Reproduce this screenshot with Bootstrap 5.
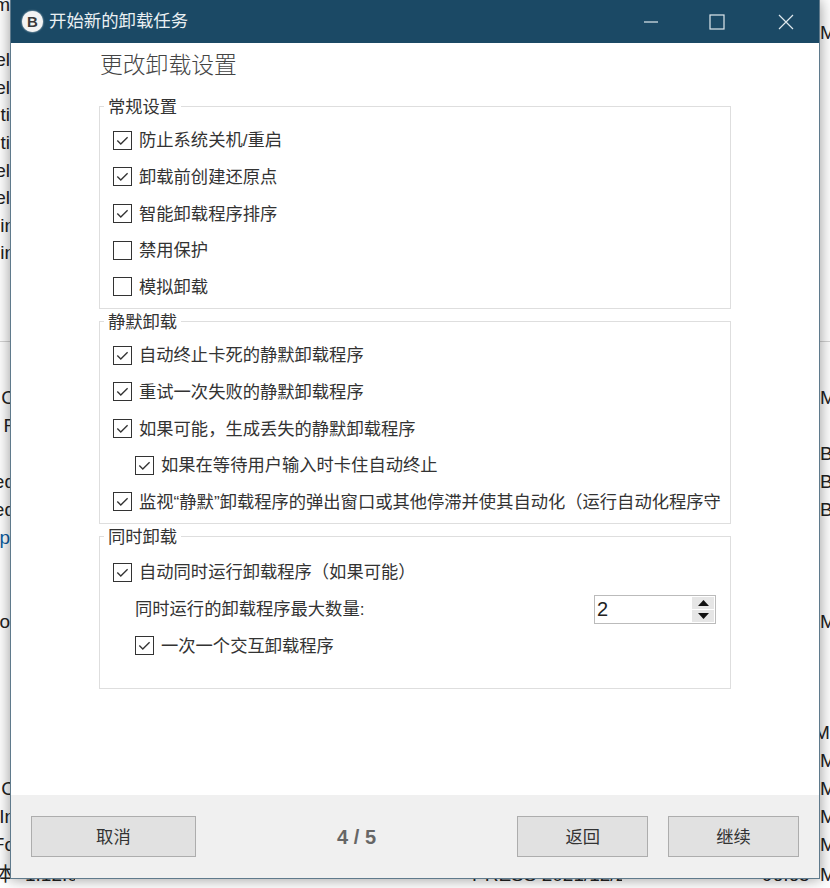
<!DOCTYPE html>
<html lang="zh-CN">
<head>
<meta charset="utf-8">
<title>开始新的卸载任务</title>
<link href="https://cdn.jsdelivr.net/npm/bootstrap@5.3.0/dist/css/bootstrap.min.css" rel="stylesheet">
<style>
html,body{height:888px;overflow:hidden;background:#fff;}
body{font-family:"Liberation Sans","Noto Sans CJK SC",sans-serif;color:#222;position:relative;}
.back-panel{height:342px;border-bottom:1px solid #d4d4d4;overflow:hidden;}
.back-panel>:first-child{margin-top:-9px;}
.back-panel2{height:546px;padding-top:42px;overflow:hidden;}
.back-row{height:27.6px;line-height:27.6px;font-size:19px;display:flex;justify-content:space-between;white-space:nowrap;}
.back-panel2 .back-row{height:27.95px;line-height:27.95px;}
.back-panel2 .back-last{margin-top:2px;}
.back-l{width:10px;display:flex;justify-content:flex-end;overflow:hidden;}
.back-cut{flex:none;margin-right:-5px;}
.back-r{width:10px;overflow:hidden;}
.back-shift{text-indent:-6px;}
.back-link{color:#0d5c9e;}
.back-date{width:150px;margin-left:auto;margin-right:140px;overflow:hidden;}
.back-size{width:50px;margin-right:8px;overflow:hidden;}
.back-ver{width:50px;margin-left:15px;overflow:hidden;}
.app-window{position:absolute;left:10px;top:0;width:810px;height:879px;background:#fff;border:solid #5f7a8c;border-width:0 1px 1px 1px;box-shadow:0 0 14px rgba(0,0,0,.42);display:flex;flex-direction:column;}
.title-strip{height:43px;flex:none;background:#1b4965;color:#eaf0f3;font-size:17.4px;padding-left:11px;gap:6px;}
.logo-disc{width:21px;height:21px;border-radius:50%;background:#f3f3f3;color:#3a3a3a;font:bold 15px/21px "Liberation Sans",sans-serif;text-align:center;box-shadow:0 0 2px #fff;}
.win-btns{margin-left:auto;margin-right:-1px;}
.win-btn{width:67.5px;height:43px;display:flex;align-items:center;justify-content:center;}
.win-btn:nth-child(2){padding-right:3px;}
.win-btn svg{display:block;}
.body-area{flex:1;padding:0 88px 0 88px;min-height:0;}
.page-head{font-size:22.8px;line-height:44px;height:63px;padding-left:1px;color:#444;font-weight:300;}
.grp{border:1px solid #dedede;margin-bottom:12px;padding-left:13px;overflow:hidden;}
.grp-a{height:203px;}
.grp-b{height:203px;}
.grp-c{height:153px;}
.grp-wrap{position:relative;}
.grp-title{position:absolute;left:5px;top:-9px;background:#fff;padding:0 4px;font-size:17.3px;line-height:20px;color:#333;z-index:1;}
.grp-list{padding-top:15px;}
.grp-c .grp-list{padding-top:17px;}
.opt{height:36.6px;display:flex;align-items:center;gap:7px;font-size:17.3px;color:#333;margin:0;white-space:nowrap;}
.opt-txt{padding-top:2px;}
.opt-in{padding-left:22px;}
.opt .form-check-input{width:19px;height:19px;margin:0;flex:none;border:1.4px solid #333;border-radius:0;background-color:#fff;box-shadow:none;}
.opt .form-check-input:checked{background-color:#fff;border-color:#333;background-size:100% 100%;background-image:url("data:image/svg+xml,%3Csvg xmlns='http://www.w3.org/2000/svg' viewBox='0 0 19 19'%3E%3Cpath d='M3.7 9.6l3.9 3.9 7.6-7.6' fill='none' stroke='%23333' stroke-width='1.5'/%3E%3C/svg%3E");}
.spin-row{height:36.6px;padding:2px 14px 0 22px;display:flex;align-items:center;justify-content:space-between;font-size:17.3px;color:#333;}
.spin-box{width:122px;height:29px;border:1px solid #bbb;display:flex;justify-content:space-between;padding:1px;}
.spin-val{font-size:20px;line-height:25px;color:#222;padding-left:1px;}
.spin-arrows{width:22px;display:flex;flex-direction:column;gap:1px;}
.spin-arrows span{flex:1;background:#e6e6e6;display:flex;align-items:center;justify-content:center;}
.foot-bar{height:83px;flex:none;background:#f0f0f0;padding:21px 20px 0 20px;}
.foot-btn{height:41px;background:#e1e1e1;border:1px solid #adadad;border-radius:0;color:#333;font-size:17.3px;padding:2px 0 0;line-height:1;}
.foot-btn:hover{background:#e1e1e1;border-color:#adadad;}
.btn-wide{width:165px;}
.btn-std{width:131px;}
.step-text{font-size:20px;font-weight:700;color:#666;width:322px;text-align:center;line-height:42px;}
.btn-gap{width:20px;}
</style>
</head>
<body>
<div class="back-panel">
  <div class="back-row"><span class="back-l">m</span></div>
  <div class="back-row"><span class="back-l"></span><span class="back-r">M</span></div>
  <div class="back-row"><span class="back-l">el</span></div>
  <div class="back-row"><span class="back-l">el</span></div>
  <div class="back-row"><span class="back-l">ti</span></div>
  <div class="back-row"><span class="back-l">ti</span></div>
  <div class="back-row"><span class="back-l">el</span></div>
  <div class="back-row"><span class="back-l">el</span></div>
  <div class="back-row"><span class="back-l"><span class="back-cut">in</span></span></div>
  <div class="back-row"><span class="back-l"><span class="back-cut">in</span></span></div>
</div>
<div class="back-panel2">
  <div class="back-row"><span class="back-l"><span class="back-cut">C</span></span><span class="back-r">M</span></div>
  <div class="back-row"><span class="back-l"><span class="back-cut">F</span></span><span class="back-r"></span></div>
  <div class="back-row"><span class="back-l"></span><span class="back-r">B</span></div>
  <div class="back-row"><span class="back-l"><span class="back-cut">ed</span></span><span class="back-r">B</span></div>
  <div class="back-row"><span class="back-l"><span class="back-cut">ed</span></span><span class="back-r">B</span></div>
  <div class="back-row"><span class="back-l back-link">p</span><span class="back-r"></span></div>
  <div class="back-row"></div>
  <div class="back-row"></div>
  <div class="back-row"><span class="back-l">o</span><span class="back-r">M</span></div>
  <div class="back-row"></div>
  <div class="back-row"></div>
  <div class="back-row"></div>
  <div class="back-row"><span class="back-l"></span><span class="back-r back-shift">MB</span></div>
  <div class="back-row"><span class="back-l"></span><span class="back-r">M</span></div>
  <div class="back-row"><span class="back-l"><span class="back-cut">C</span></span><span class="back-r">M</span></div>
  <div class="back-row"><span class="back-l"><span class="back-cut">In</span></span><span class="back-r">M</span></div>
  <div class="back-row"><span class="back-l"><span class="back-cut">Fo</span></span><span class="back-r">M</span></div>
  <div class="back-row back-last"><span class="back-l"><span class="back-cut">版本</span></span><span class="back-ver">1.12.0</span><span class="back-date">PRESS 2021/12/27</span><span class="back-size">96.65</span><span class="back-r">M</span></div>
</div>

<div class="app-window">
  <div class="title-strip d-flex align-items-center">
    <span class="logo-disc">B</span>
    <span>开始新的卸载任务</span>
    <div class="win-btns d-flex">
      <div class="win-btn"><svg width="16" height="16" viewBox="0 0 16 16"><path d="M1 8h14" stroke="#dfe8ed" stroke-width="1.2"/></svg></div>
      <div class="win-btn"><svg width="16" height="16" viewBox="0 0 16 16"><rect x="1" y="1" width="14" height="14" fill="none" stroke="#dfe8ed" stroke-width="1.2"/></svg></div>
      <div class="win-btn"><svg width="16" height="16" viewBox="0 0 16 16"><path d="M1 1l14 14M15 1L1 15" stroke="#dfe8ed" stroke-width="1.2"/></svg></div>
    </div>
  </div>
  <div class="body-area">
    <div class="page-head">更改卸载设置</div>
    <div class="grp-wrap">
      <div class="grp-title">常规设置</div>
      <div class="grp grp-a"><div class="grp-list">
        <label class="opt"><input class="form-check-input" type="checkbox" checked><span class="opt-txt">防止系统关机/重启</span></label>
        <label class="opt"><input class="form-check-input" type="checkbox" checked><span class="opt-txt">卸载前创建还原点</span></label>
        <label class="opt"><input class="form-check-input" type="checkbox" checked><span class="opt-txt">智能卸载程序排序</span></label>
        <label class="opt"><input class="form-check-input" type="checkbox"><span class="opt-txt">禁用保护</span></label>
        <label class="opt"><input class="form-check-input" type="checkbox"><span class="opt-txt">模拟卸载</span></label>
      </div></div>
    </div>
    <div class="grp-wrap">
      <div class="grp-title">静默卸载</div>
      <div class="grp grp-b"><div class="grp-list">
        <label class="opt"><input class="form-check-input" type="checkbox" checked><span class="opt-txt">自动终止卡死的静默卸载程序</span></label>
        <label class="opt"><input class="form-check-input" type="checkbox" checked><span class="opt-txt">重试一次失败的静默卸载程序</span></label>
        <label class="opt"><input class="form-check-input" type="checkbox" checked><span class="opt-txt">如果可能，生成丢失的静默卸载程序</span></label>
        <label class="opt opt-in"><input class="form-check-input" type="checkbox" checked><span class="opt-txt">如果在等待用户输入时卡住自动终止</span></label>
        <label class="opt"><input class="form-check-input" type="checkbox" checked><span class="opt-txt">监视“静默”卸载程序的弹出窗口或其他停滞并使其自动化（运行自动化程序守</span></label>
      </div></div>
    </div>
    <div class="grp-wrap">
      <div class="grp-title">同时卸载</div>
      <div class="grp grp-c"><div class="grp-list">
        <label class="opt"><input class="form-check-input" type="checkbox" checked><span class="opt-txt">自动同时运行卸载程序（如果可能）</span></label>
        <div class="spin-row"><span>同时运行的卸载程序最大数量:</span>
          <div class="spin-box"><span class="spin-val">2</span>
            <div class="spin-arrows">
              <span><svg width="11" height="6" viewBox="0 0 11 6"><path d="M5.5 0L11 6H0z" fill="#111"/></svg></span>
              <span><svg width="11" height="6" viewBox="0 0 11 6"><path d="M0 0h11L5.5 6z" fill="#111"/></svg></span>
            </div>
          </div>
        </div>
        <label class="opt opt-in"><input class="form-check-input" type="checkbox" checked><span class="opt-txt">一次一个交互卸载程序</span></label>
      </div></div>
    </div>
  </div>
  <div class="foot-bar d-flex align-items-start">
    <button type="button" class="btn foot-btn btn-wide">取消</button>
    <div class="step-text">4 / 5</div>
    <button type="button" class="btn foot-btn btn-std">返回</button>
    <div class="btn-gap"></div>
    <button type="button" class="btn foot-btn btn-std">继续</button>
  </div>
</div>
<script src="https://cdn.jsdelivr.net/npm/bootstrap@5.3.0/dist/js/bootstrap.bundle.min.js"></script>
</body>
</html>
